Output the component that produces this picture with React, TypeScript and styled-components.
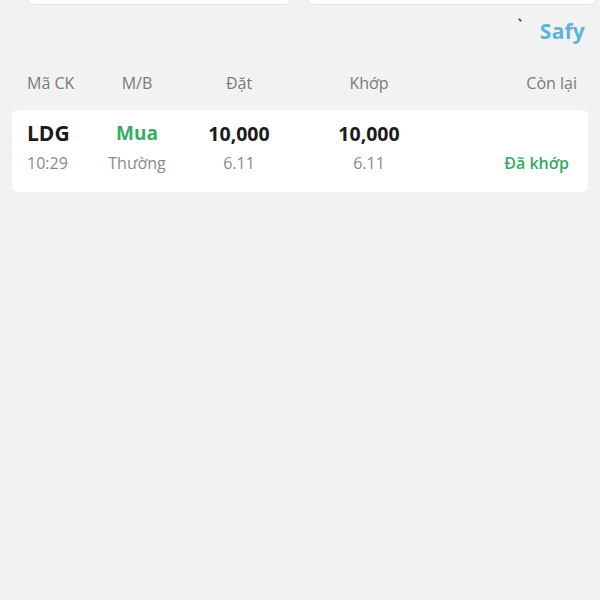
import React from "react";
import styled, { createGlobalStyle } from "styled-components";

const Global = createGlobalStyle`
  html, body { margin: 0; padding: 0; background: #f2f2f2; }
  body { font-family: "Open Sans", "Noto Sans", sans-serif; }
`;

const Page = styled.div`
  width: 600px;
  height: 600px;
  background: #f2f2f2;
  overflow: hidden;
  display: flex;
  flex-direction: column;
`;

const InputRow = styled.div`
  display: flex;
  gap: 18px;
  padding: 0 4px 0 28px;
  height: 5px;
`;

const InputStub = styled.div<{ $w: number }>`
  width: ${(p) => p.$w}px;
  height: 4px;
  background: #ffffff;
  border: 1px solid #e4e4e4;
  border-top: none;
  border-radius: 0 0 5px 5px;
`;

const BrandRow = styled.div`
  display: flex;
  justify-content: flex-end;
  align-items: flex-start;
  padding: 11px 15px 0 0;
  height: 40px;
  box-sizing: border-box;
`;

const Brand = styled.div`
  position: relative;
  font-size: 21px;
  font-weight: 700;
  color: #5db5d8;
  line-height: 30px;
  letter-spacing: 0.2px;
`;

const Tick = styled.span`
  position: absolute;
  left: -21px;
  top: 2px;
  width: 2px;
  height: 4px;
  background: #3a6f95;
  transform: rotate(-45deg);
  border-radius: 1px;
`;

const cols = "60px 100px 104px 156px 1fr";

const HeaderRow = styled.div`
  display: grid;
  grid-template-columns: ${cols};
  padding: 27px 23px 0 27px;
  height: 65px;
  box-sizing: border-box;
  align-items: start;
  color: #7a7a7a;
  font-size: 16px;
  line-height: 22px;
`;

const Cell = styled.div<{ $align: "left" | "center" | "right" }>`
  text-align: ${(p) => p.$align};
  white-space: nowrap;
`;

const Card = styled.div`
  margin: 0 12px;
  background: #ffffff;
  border-radius: 6px;
  padding: 8px 19px 14px 15px;
  display: grid;
  grid-template-columns: ${cols};
  grid-auto-rows: 30px;
  align-items: center;
`;

const Strong = styled(Cell)`
  font-size: 19.5px;
  font-weight: 700;
  color: #1c1c1c;
`;

const Code = styled(Strong)`
  font-size: 21px;
`;

const Side = styled(Cell)`
  font-size: 19px;
  font-weight: 700;
  color: #36ad62;
`;

const Sub = styled(Cell)`
  font-size: 16px;
  color: #8a8a8a;
`;

const Status = styled(Cell)`
  font-size: 16px;
  font-weight: 600;
  color: #3aa862;
`;

export default function App() {
  return (
    <Page>
      <Global />
      <InputRow>
        <InputStub $w={262} />
        <InputStub $w={288} />
      </InputRow>
      <BrandRow>
        <Brand>
          <Tick />
          Safy
        </Brand>
      </BrandRow>
      <HeaderRow>
        <Cell $align="left">Mã CK</Cell>
        <Cell $align="center">M/B</Cell>
        <Cell $align="center">Đặt</Cell>
        <Cell $align="center">Khớp</Cell>
        <Cell $align="right">Còn lại</Cell>
      </HeaderRow>
      <Card>
        <Code $align="left">LDG</Code>
        <Side $align="center">Mua</Side>
        <Strong $align="center">10,000</Strong>
        <Strong $align="center">10,000</Strong>
        <Cell $align="right" />
        <Sub $align="left">10:29</Sub>
        <Sub $align="center">Thường</Sub>
        <Sub $align="center">6.11</Sub>
        <Sub $align="center">6.11</Sub>
        <Status $align="right">Đã khớp</Status>
      </Card>
    </Page>
  );
}
